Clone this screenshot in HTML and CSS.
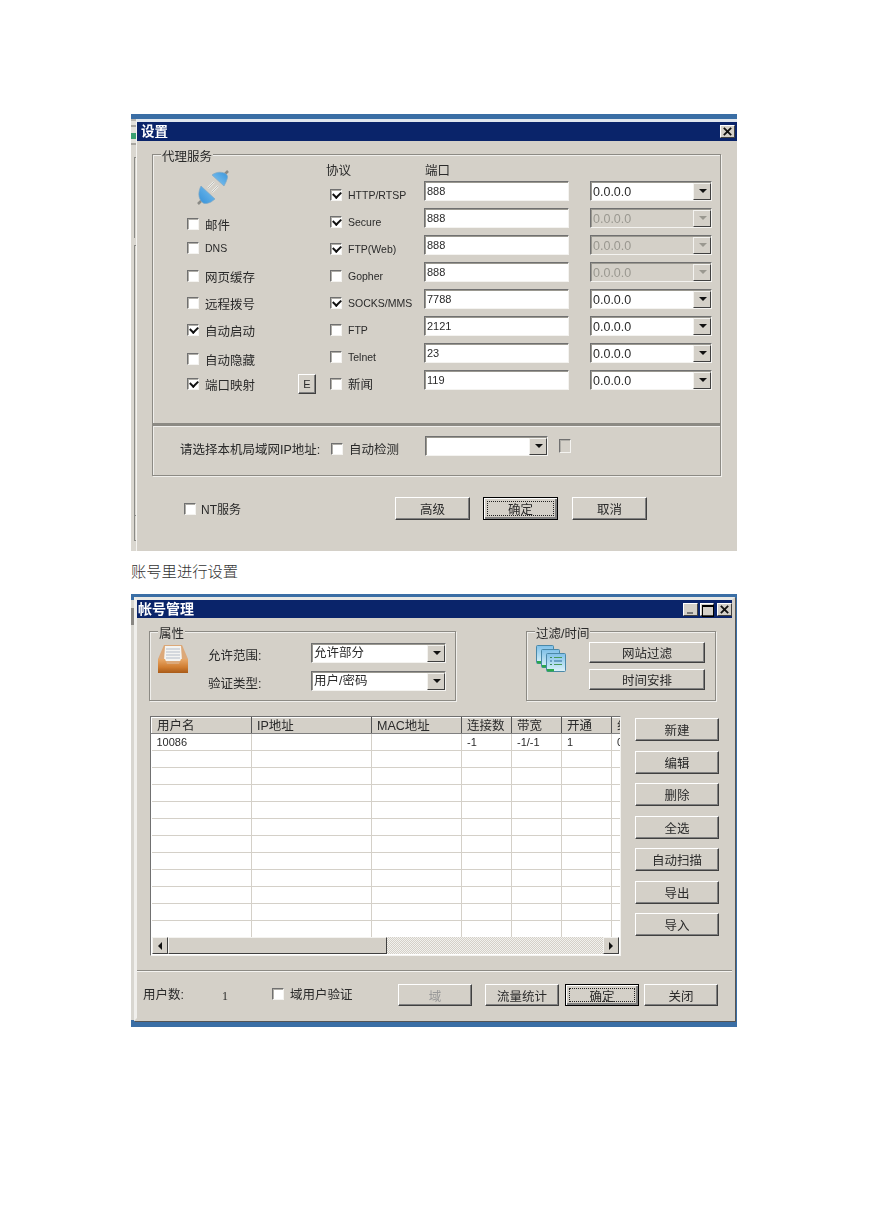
FILE: index.html
```html
<!DOCTYPE html>
<html lang="zh">
<head>
<meta charset="utf-8">
<title>设置</title>
<link rel="stylesheet" href="styles.css">
</head>
<body>
<main class="doc">
  <section class="shot shot-a">
    <div class="behind">
      <i class="behind-top"></i>
      <i class="behind-seg seg-1"></i>
      <i class="behind-seg seg-2"></i>
      <i class="behind-seg seg-3"></i>
    </div>
    <div class="dlg">
      <header class="title"><span>设置</span><div class="caps"><b class="cap cap-x"><svg viewBox="0 0 14 12" aria-hidden="true"><path d="M3 2l8 8M11 2l-8 8"/></svg></b></div></header>
      <div class="body-a">
        <div class="group group-main">
          <span class="legend">代理服务</span>
          <div class="col-left">
            <svg class="plug" viewBox="0 0 32 36" aria-hidden="true">
              <defs>
                <linearGradient id="plugA" x1="0" y1="1" x2="1" y2="0"><stop offset="0" stop-color="#8ccaf2"/><stop offset="1" stop-color="#3a96dc"/></linearGradient>
                <linearGradient id="plugB" x1="1" y1="0" x2="0" y2="1"><stop offset="0" stop-color="#7cc2f0"/><stop offset="1" stop-color="#3490d8"/></linearGradient>
              </defs>
              <path d="M31 2l-4 4M1 35l4-4" stroke="#8a8a86" stroke-width="2.5"/>
              <path d="M11 19l6-6M15 23l6-6" stroke="#f0f0ec" stroke-width="2"/>
              <path d="M11 19l6-6M15 23l6-6" stroke="#9a9a96" stroke-width=".6"/>
              <path d="M15 6l12 11 2-4c2-5 2-6 0-8-3-2-9-3-14 1z" fill="url(#plugA)" stroke="#7fa8c4" stroke-width=".7"/>
              <path d="M4 17l14 13-4 3c-5 2-7 2-9 0-4-4-4-10-1-16z" fill="url(#plugB)" stroke="#7fa8c4" stroke-width=".7"/>
            </svg>
            <div class="opts">
              <label class="opt"><i class="chk"></i>邮件</label>
              <label class="opt opt-latin"><i class="chk"></i>DNS</label>
              <label class="opt"><i class="chk"></i>网页缓存</label>
              <label class="opt"><i class="chk"></i>远程拨号</label>
              <label class="opt"><i class="chk on"></i>自动启动</label>
              <label class="opt"><i class="chk"></i>自动隐藏</label>
              <label class="opt"><i class="chk on"></i>端口映射<b class="btn btn-e">E</b></label>
            </div>
          </div>
          <div class="col-right">
            <span class="head head-p">协议</span><span class="head head-port">端口</span><span></span>
            <label class="proto"><i class="chk on"></i>HTTP/RTSP</label><span class="field">888</span><span class="combo">0.0.0.0</span>
            <label class="proto"><i class="chk on"></i>Secure</label><span class="field">888</span><span class="combo off">0.0.0.0</span>
            <label class="proto"><i class="chk on"></i>FTP(Web)</label><span class="field">888</span><span class="combo off">0.0.0.0</span>
            <label class="proto"><i class="chk"></i>Gopher</label><span class="field">888</span><span class="combo off">0.0.0.0</span>
            <label class="proto"><i class="chk on"></i>SOCKS/MMS</label><span class="field">7788</span><span class="combo">0.0.0.0</span>
            <label class="proto"><i class="chk"></i>FTP</label><span class="field">2121</span><span class="combo">0.0.0.0</span>
            <label class="proto"><i class="chk"></i>Telnet</label><span class="field">23</span><span class="combo">0.0.0.0</span>
            <label class="proto proto-cn"><i class="chk"></i>新闻</label><span class="field">119</span><span class="combo">0.0.0.0</span>
          </div>
        </div>
        <div class="group group-ip">
          <span class="ip-label">请选择本机局域网IP地址:</span>
          <label class="ip-auto"><i class="chk"></i>自动检测</label>
          <span class="combo combo-ip"></span>
          <i class="chk chk-tall"></i>
        </div>
        <div class="foot-a">
          <label class="opt-nt"><i class="chk"></i>NT服务</label>
          <span class="btn btn-wide btn-adv">高级</span>
          <span class="btn btn-wide btn-def">确定</span>
          <span class="btn btn-wide">取消</span>
        </div>
      </div>
    </div>
  </section>

  <p class="caption">账号里进行设置</p>

  <section class="shot shot-b">
    <div class="behind-b"><i class="behind-patch"></i></div>
    <div class="dlg">
      <header class="title title-b"><span>帐号管理</span>
        <div class="caps"><b class="cap cap-min"></b><b class="cap cap-max"></b><b class="cap cap-x"><svg viewBox="0 0 14 12" aria-hidden="true"><path d="M3 2l8 8M11 2l-8 8"/></svg></b></div>
      </header>
      <div class="body-b">
        <div class="top-b">
          <div class="group group-attr">
            <span class="legend">属性</span>
            <svg class="tray" viewBox="0 0 30 28" aria-hidden="true">
              <defs>
                <linearGradient id="trayF" x1="0" y1="0" x2="0" y2="1"><stop offset="0" stop-color="#e8a868"/><stop offset=".6" stop-color="#cf7c30"/><stop offset="1" stop-color="#a85a18"/></linearGradient>
              </defs>
              <path d="M6 0h18l6 14v14H0V14z" fill="#dca878"/>
              <path d="M7 1h16l1 15H6z" fill="#f4f4f2"/>
              <path d="M8 4h14M8 7h14M8 10h14M8 13h14" stroke="#b4bcc8"/>
              <path d="M0 14h7l2 5h12l2-5h7v14H0z" fill="url(#trayF)"/>
            </svg>
            <div class="attr-fields">
              <span class="attr-label">允许范围:</span><span class="combo combo-cn">允许部分</span>
              <span class="attr-label">验证类型:</span><span class="combo combo-cn">用户/密码</span>
            </div>
          </div>
          <div class="group group-filter">
            <span class="legend">过滤/时间</span>
            <svg class="pages" viewBox="0 0 30 27" aria-hidden="true">
              <defs>
                <linearGradient id="pageF" x1="0" y1="0" x2="0" y2="1"><stop offset="0" stop-color="#7fc0e8"/><stop offset="1" stop-color="#dcf2f8"/></linearGradient>
              </defs>
              <rect x=".5" y=".5" width="17" height="18" rx="1" fill="url(#pageF)" stroke="#4a88a8"/>
              <rect x="1" y="16" width="6" height="2.5" fill="#2aa84a"/>
              <rect x="5.5" y="4.5" width="18" height="18" rx="1" fill="url(#pageF)" stroke="#4a88a8"/>
              <rect x="6" y="20" width="6" height="2.5" fill="#2aa84a"/>
              <rect x="10.5" y="8.5" width="19" height="18" rx="1" fill="url(#pageF)" stroke="#4a88a8"/>
              <rect x="11" y="24" width="7" height="2.5" fill="#2aa84a"/>
              <path d="M14 12.5h2M14 19.5h2" stroke="#3a8a58"/>
              <path d="M14 16h2M18 16h8" stroke="#2a6a98"/>
              <path d="M18 12.5h8M18 19.5h8" stroke="#4a9a58"/>
            </svg>
            <div class="filter-btns">
              <span class="btn">网站过滤</span>
              <span class="btn">时间安排</span>
            </div>
          </div>
        </div>
        <div class="mid-b">
          <div class="list">
            <div class="list-view">
              <table class="grid">
                <colgroup><col class="c1"><col class="c2"><col class="c3"><col class="c4"><col class="c4"><col class="c4"><col class="c5"></colgroup>
                <thead><tr><th>用户名</th><th>IP地址</th><th>MAC地址</th><th>连接数</th><th>带宽</th><th>开通</th><th>组</th></tr></thead>
                <tbody>
                  <tr><td>10086</td><td></td><td></td><td>-1</td><td>-1/-1</td><td>1</td><td>0</td></tr>
                  <tr><td></td><td></td><td></td><td></td><td></td><td></td><td></td></tr>
                  <tr><td></td><td></td><td></td><td></td><td></td><td></td><td></td></tr>
                  <tr><td></td><td></td><td></td><td></td><td></td><td></td><td></td></tr>
                  <tr><td></td><td></td><td></td><td></td><td></td><td></td><td></td></tr>
                  <tr><td></td><td></td><td></td><td></td><td></td><td></td><td></td></tr>
                  <tr><td></td><td></td><td></td><td></td><td></td><td></td><td></td></tr>
                  <tr><td></td><td></td><td></td><td></td><td></td><td></td><td></td></tr>
                  <tr><td></td><td></td><td></td><td></td><td></td><td></td><td></td></tr>
                  <tr><td></td><td></td><td></td><td></td><td></td><td></td><td></td></tr>
                  <tr><td></td><td></td><td></td><td></td><td></td><td></td><td></td></tr>
                  <tr><td></td><td></td><td></td><td></td><td></td><td></td><td></td></tr>
                </tbody>
              </table>
            </div>
            <div class="hscroll">
              <span class="sb-btn sb-left"></span>
              <span class="sb-thumb"></span>
              <span class="sb-track"></span>
              <span class="sb-btn sb-right"></span>
            </div>
          </div>
          <div class="side">
            <span class="btn">新建</span><span class="btn">编辑</span><span class="btn">删除</span><span class="btn">全选</span><span class="btn">自动扫描</span><span class="btn">导出</span><span class="btn">导入</span>
          </div>
        </div>
        <div class="foot-b">
          <span class="count-label">用户数:</span>
          <span class="count-val">1</span>
          <label class="dom-check"><i class="chk"></i>域用户验证</label>
          <span class="btn btn-foot btn-dis">域</span>
          <span class="btn btn-foot">流量统计</span>
          <span class="btn btn-foot btn-def">确定</span>
          <span class="btn btn-foot">关闭</span>
        </div>
      </div>
    </div>
  </section>
</main>
</body>
</html>
```

FILE: styles.css
```css
* { box-sizing: border-box; }
html, body { margin: 0; background: #fff; }
body { font: 12.5px "Liberation Sans", "Noto Sans CJK SC", sans-serif; color: #2a2a2a; }
i, b { font-style: normal; font-weight: normal; }
label { display: flex; align-items: center; }

.doc { padding: 114px 0 0 131px; width: 869px; height: 1228px; }
.shot { width: 606px; background: #3a6ea5; display: flex; padding-top: 5px; filter: blur(.35px); }
.shot-a { height: 437px; }
.shot-b { height: 433px; padding: 3px 2px 6px 0; }
.caption { margin: 0; height: 43px; padding-top: 12px; font: 15.3px/17px "Liberation Serif", "Noto Sans CJK SC", serif; font-weight: 300; color: #333; }

.behind { width: 6px; background: #dad7d0; display: flex; flex-direction: column; }
.behind-top { display: block; height: 34px; margin-bottom: 4px; background: linear-gradient(#b8b6b0 0 2px, #e4e2dc 2px 6px, #a8a6a0 6px 8px, #e4e2dc 8px 14px, #3aa070 14px 20px, #e4e2dc 20px 24px, #a8a6a0 24px 26px, #dad7d0 26px); }
.behind-seg { display: block; margin-left: 3px; border-left: 1px solid #8a8a86; }
.seg-1 { height: 81px; border-top: 1px solid #8a8a86; }
.seg-2 { height: 270px; margin-top: 7px; border-top: 1px solid #8a8a86; }
.seg-3 { height: 26px; border-top: 1px solid #8a8a86; border-bottom: 1px solid #8a8a86; }
.behind-b { width: 3px; margin-top: 3px; margin-bottom: 1px; background: #d8d6d0; padding-top: 8px; }
.behind-patch { display: block; height: 17px; background: #8a8884; }

.dlg { flex: 1; background: #d4d0c8; border-top: 3px solid #dfe6ee; display: flex; flex-direction: column; }
.shot-a .dlg { border-left: 1px solid #f4f3f0; margin-left: -1px; }
.shot-b .dlg { border: 3px solid #d4d0c8; border-top-color: #e8e8e4; border-left-color: #f0efec; box-shadow: 1px 1px 0 #555; }

.title { height: 19px; background: #0a246a; color: #fff; font-weight: 700; font-size: 13.5px; line-height: 19px; padding: 0 2px 0 4px; display: flex; justify-content: space-between; align-items: center; }
.title-b { height: 18px; font-size: 14px; padding: 0 0 0 1px; }
.caps { display: flex; }
.cap { width: 15px; height: 13px; background: #d4d0c8; color: #000; border: 1px solid; border-color: #fff #404040 #404040 #fff; display: block; position: relative; }
.cap svg { display: block; width: 100%; height: 100%; fill: none; stroke: #111; stroke-width: 2; }
.cap-min::after { content: ""; position: absolute; left: 3px; bottom: 1px; width: 6px; height: 2px; background: #777; }
.cap-max { margin: 0 3px 0 2px; width: 14px; }
.cap-max::after { content: ""; position: absolute; left: 1px; top: 1px; width: 10px; height: 9px; border: 1px solid #000; border-top-width: 2px; }

.chk { display: block; flex: none; width: 12px; height: 12px; background: #fff; border: 1px solid; border-color: #707070 #f4f3f0 #f4f3f0 #707070; box-shadow: inset 1px 1px 0 #b0aea8; position: relative; }
.chk.on::after { content: ""; position: absolute; left: 2px; top: 0; width: 6px; height: 4px; margin-top: 1px; border-left: 2px solid #111; border-bottom: 2px solid #111; transform: rotate(-45deg); }

.btn { display: flex; align-items: center; justify-content: center; background: #d4d0c8; border: 1px solid; border-color: #fff #404040 #404040 #fff; box-shadow: inset -1px -1px 0 #808080; font-size: 12.5px; }
.btn-def { border-color: #000; box-shadow: inset 1px 1px 0 #fff, inset -2px -2px 0 #808080; outline: 1px dotted #222; outline-offset: -5px; }
.btn-dis { color: #999; }

.group { position: relative; border: 1px solid #8c8a84; box-shadow: 1px 1px 0 #f0efec, inset 1px 1px 0 #f0efec; }
.legend { position: absolute; top: -5px; left: 8px; padding: 0 1px; line-height: 15px; background: #d4d0c8; font-size: 12.5px; }

.field { display: block; background: #fff; border: 1px solid; border-color: #707070 #f4f3f0 #f4f3f0 #707070; box-shadow: inset 1px 1px 0 #9a9890; font: 11px/15px "Liberation Sans", sans-serif; padding: 2px 0 0 2px; height: 20px; }
.combo { display: block; position: relative; background: #fff; border: 1px solid; border-color: #707070 #f4f3f0 #f4f3f0 #707070; box-shadow: inset 1px 1px 0 #9a9890; font: 12.5px/21px "Liberation Sans", sans-serif; padding-left: 2px; height: 20px; }
.combo::after { content: ""; position: absolute; right: 0; top: 1px; bottom: 0; width: 16px; border: 1px solid; border-color: #f4f3f0 #404040 #404040 #f4f3f0; background: #d4d0c8; }
.combo::before { content: ""; position: absolute; z-index: 1; right: 4px; top: 7px; border: 4px solid transparent; border-top: 4px solid #111; border-bottom: 0; }
.combo.off { background: #d4d0c8; color: #9a9890; }
.combo.off::before { border-top-color: #9a9890; }
.combo-cn { font: 12.5px/19px "Liberation Sans", "Noto Sans CJK SC", sans-serif; }

/* settings dialog */
.body-a { flex: 1; padding: 13px 16px 0 15px; display: flex; flex-direction: column; }
.group-main { height: 270px; display: flex; }
.col-left { width: 177px; flex: none; padding: 14px 0 0 34px; }
.plug { display: block; width: 32px; height: 36px; margin-left: 10px; }
.opts { margin-top: 6px; display: grid; grid-template-rows: 26px 22px 34px 20px 34px 24px 26px; }
.opt { gap: 6px; font-size: 12.5px; }
.opt-latin { font-size: 10.5px; }
.btn-e { flex: none; width: 18px; height: 20px; font: 11px "Liberation Sans", sans-serif; margin-left: 37px; }
.col-right { padding-top: 8px; display: grid; grid-template-columns: 94px 145px 143px; grid-template-rows: 11px repeat(8, 20px); row-gap: 7px; align-content: start; }
.col-right > .combo { margin-left: 21px; width: 122px; }
.head { font-size: 12.5px; line-height: 16px; }
.head-p { margin-left: -4px; }
.head-port { margin-left: 1px; }
.proto { gap: 6px; padding-top: 7px; font: 10.5px "Liberation Sans", "Noto Sans CJK SC", sans-serif; }
.proto-cn { font-size: 12.5px; }
.group-ip { height: 52px; border-top: 2px solid #8c8a84; display: flex; align-items: center; padding: 0 0 0 27px; }
.ip-label { width: 151px; flex: none; font-size: 12.5px; margin-top: -4px; }
.ip-auto { width: 94px; flex: none; gap: 6px; font-size: 12.5px; margin-top: -4px; }
.combo-ip { width: 123px; margin-top: -10px; flex: none; }
.chk-tall { height: 14px; margin: -10px 0 0 11px; background: #d4d0c8; }
.foot-a { display: flex; align-items: center; padding: 21px 0 0 32px; }
.opt-nt { width: 211px; flex: none; gap: 5px; font-size: 12px; }
.btn-wide { width: 75px; height: 23px; flex: none; }
.btn-adv { margin-right: 13px; }
.foot-a .btn-def { margin-right: 14px; }

/* account dialog */
.body-b { flex: 1; display: flex; flex-direction: column; }
.top-b { display: flex; padding: 13px 0 0 12px; gap: 70px; }
.group-attr { width: 307px; height: 70px; display: flex; padding: 11px 0 0 8px; }
.tray { width: 30px; height: 28px; margin-top: 2px; flex: none; }
.attr-fields { margin-left: 20px; display: grid; grid-template-columns: 103px 135px; grid-template-rows: 20px 20px; row-gap: 8px; align-items: center; font-size: 12.5px; }
.attr-label { padding-top: 3px; }
.group-filter { width: 190px; height: 70px; display: flex; padding: 10px 0 0 9px; }
.pages { width: 30px; height: 27px; margin-top: 3px; flex: none; }
.filter-btns { margin-left: 23px; width: 116px; display: grid; grid-template-rows: 21px 21px; row-gap: 6px; }
.mid-b { display: flex; padding: 15px 0 0 13px; gap: 14px; }
.list { width: 471px; height: 240px; display: flex; flex-direction: column; border: 1px solid; border-color: #707070 #f4f3f0 #f4f3f0 #707070; background: #fff; }
.list-view { height: 220px; overflow: hidden; }
.grid { table-layout: fixed; border-collapse: collapse; width: 541px; font: 11px/14px "Liberation Sans", "Noto Sans CJK SC", sans-serif; }
.c1 { width: 100px; }
.c2 { width: 120px; }
.c3 { width: 90px; }
.c4 { width: 50px; }
.c5 { width: 81px; }
.grid th { height: 16px; padding: 0 0 0 5px; background: #d4d0c8; font-weight: normal; font-size: 12.5px; text-align: left; overflow: hidden; white-space: nowrap; border: 1px solid; border-color: #fff #555 #808080 #fff; }
.grid td { height: 17px; padding: 0 0 0 5px; border: 1px solid #d4d0c8; border-top: 0; border-left: 0; overflow: hidden; white-space: nowrap; }
.hscroll { height: 17px; display: flex; margin: 0 1px; background: #d4d0c8; }
.sb-btn { width: 16px; flex: none; position: relative; background: #d4d0c8; border: 1px solid; border-color: #f4f3f0 #404040 #404040 #f4f3f0; }
.sb-btn::after { content: ""; position: absolute; top: 4px; border: 4px solid transparent; }
.sb-left::after { left: 1px; border-right-color: #111; }
.sb-right::after { left: 5px; border-left-color: #111; }
.sb-thumb { width: 219px; flex: none; background: #d4d0c8; border: 1px solid; border-color: #f4f3f0 #404040 #404040 #f4f3f0; }
.sb-track { flex: 1; background: repeating-conic-gradient(#d4d0c8 0 25%, #f2f1ee 0 50%) 0 0 / 2px 2px; }
.side { width: 84px; padding-top: 2px; display: grid; grid-auto-rows: 23px; row-gap: 9.5px; align-content: start; }
.foot-b { margin-top: 14px; border-top: 1px solid #8c8a84; box-shadow: inset 0 1px 0 #f4f3f0; flex: 1; display: flex; align-items: flex-start; padding: 13px 0 0 6px; }
.count-label { width: 79px; flex: none; font-size: 12.5px; }
.count-val { width: 50px; flex: none; font: 12px "Liberation Serif", serif; padding-top: 5px; }
.dom-check { width: 126px; flex: none; gap: 6px; font-size: 12.5px; }
.btn-foot { width: 74px; height: 22px; flex: none; margin-right: 13px; }
.foot-b .btn-def { margin-left: -7px; margin-right: 5px; }
```
